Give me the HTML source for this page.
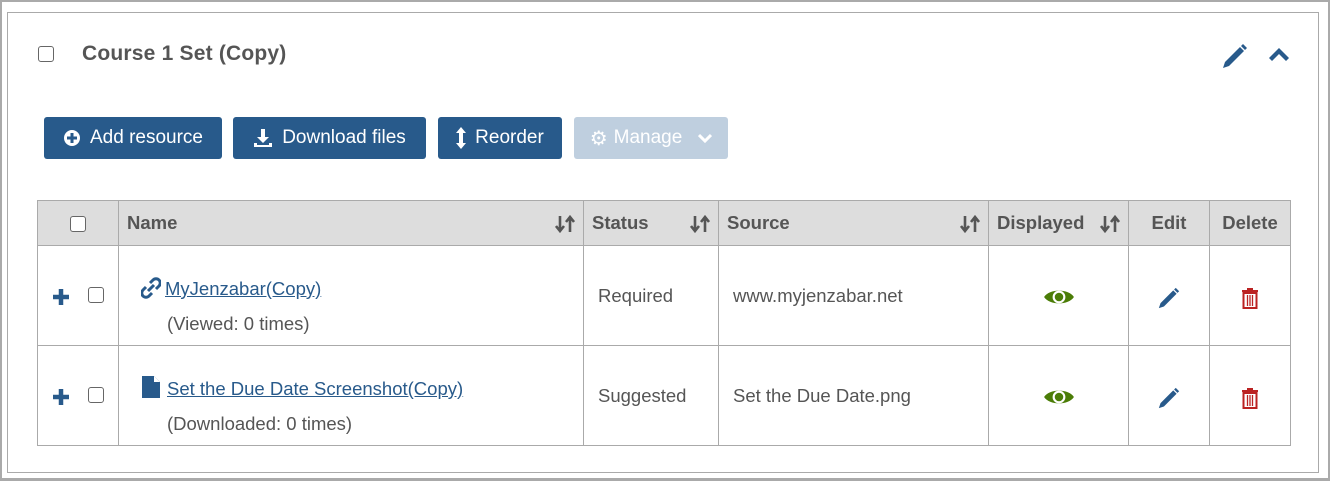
<!DOCTYPE html>
<html><head><meta charset="utf-8"><style>
*{box-sizing:border-box;margin:0;padding:0}
body{width:1330px;height:481px;background:#fff;font-family:"Liberation Sans",sans-serif;color:#555;position:relative;overflow:hidden}
.a{position:absolute}
.outer{left:0;top:0;width:1330px;height:481px;border:2px solid #aaa;border-bottom:none}
.bl{left:0;top:478px;width:1330px;height:3px;background:#aaa}
.panel{left:7px;top:12px;width:1312px;height:461px;border:1px solid #aaa}
.cb{width:16px;height:16px;border:1.5px solid #666;border-radius:3px;background:#fff}
.btn{top:117px;height:42px;background:#285a8b;color:#fff;border-radius:3px;font-size:19px;display:flex;align-items:center;justify-content:center;gap:9px}
table{position:absolute;left:37px;top:200px;border-collapse:collapse;font-size:18.5px}
td,th{border:1px solid #aaa;padding:0 8px;text-align:left}
th{background:#ddd;height:45px;font-weight:bold;color:#555}
td{height:100px;position:relative}
.sort{float:right;margin-top:2px}
a{color:#285a8b}
.c{text-align:center}
.plus{position:absolute;left:14px;top:42px}
.rcb{position:absolute;left:50px;top:41px}
.ic{position:absolute;top:41px;left:50%;transform:translateX(-50%)}
.nm{position:absolute;left:22px;top:25px;line-height:35px;white-space:nowrap}
</style></head><body>
<div class="a outer"></div><div class="a bl"></div>
<div class="a panel"></div>
<div class="a cb" style="left:38px;top:46px"></div>
<div class="a" style="left:82px;top:42px;font-size:21px;font-weight:bold;color:#555;letter-spacing:0.2px">Course 1 Set (Copy)</div>
<svg class="a" style="left:1222px;top:43px" width="26" height="26" viewBox="0 0 26 26"><path d="M1 25l2-6L18 4l4 4L7 23z M19 3l2-2 4 4-2 2z" fill="#285a8b"/></svg>
<svg class="a" style="left:1268px;top:47px" width="22" height="16" viewBox="0 0 22 16"><path d="M1 11l10-10 10 10-3 3-7-7-7 7z" fill="#285a8b"/></svg>
<div class="a btn" style="left:44px;width:178px"><svg width="18" height="18"><circle cx="9" cy="9" r="8" fill="#fff"/><path d="M9 4v10M4 9h10" stroke="#285a8b" stroke-width="3"/></svg>Add resource</div>
<div class="a btn" style="left:233px;width:193px"><svg width="20" height="20"><path d="M8 1h4v8h4l-6 6-6-6h4z M1 15h3v2h12v-2h3v4H1z" fill="#fff"/></svg>Download files</div>
<div class="a btn" style="left:438px;width:124px"><svg width="10" height="22"><path d="M5 0l5 6H7v10h3l-5 6-5-6h3V6H0z" fill="#fff"/></svg>Reorder</div>
<div class="a btn" style="left:574px;width:154px;background:#bfcfdf;gap:6px"><span style="font-size:20px">⚙</span>Manage <svg width="14" height="10" style="margin-left:10px"><path d="M1 2l6 6 6-6" stroke="#fff" stroke-width="3" fill="none"/></svg></div>
<table>
<tr><th style="width:81px;text-align:center"><span class="cb" style="display:inline-block;vertical-align:middle"></span></th>
<th style="width:465px">Name<svg class="sort" width="20" height="20" viewBox="0 0 20 20"><path d="M5 2v14M1 12l4 5 4-5M15 18V4M11 8l4-5 4 5" stroke="#555" stroke-width="2.6" fill="none"/></svg></th>
<th style="width:135px">Status<svg class="sort" width="20" height="20" viewBox="0 0 20 20"><path d="M5 2v14M1 12l4 5 4-5M15 18V4M11 8l4-5 4 5" stroke="#555" stroke-width="2.6" fill="none"/></svg></th>
<th style="width:270px">Source<svg class="sort" width="20" height="20" viewBox="0 0 20 20"><path d="M5 2v14M1 12l4 5 4-5M15 18V4M11 8l4-5 4 5" stroke="#555" stroke-width="2.6" fill="none"/></svg></th>
<th style="width:140px">Displayed<svg class="sort" width="20" height="20" viewBox="0 0 20 20"><path d="M5 2v14M1 12l4 5 4-5M15 18V4M11 8l4-5 4 5" stroke="#555" stroke-width="2.6" fill="none"/></svg></th>
<th style="width:81px" class="c">Edit</th>
<th style="width:81px" class="c">Delete</th></tr>
<tr><td><svg class="plus" width="18" height="18"><path d="M9 1v16M1 9h16" stroke="#285a8b" stroke-width="4.5"/></svg><span class="cb rcb"></span></td>
<td><div class="nm"><svg width="20" height="22" viewBox="0 0 20 22" style="vertical-align:-4px"><path d="M9 6l3-3a4 4 0 016 6l-3 3M11 16l-3 3a4 4 0 01-6-6l3-3M7 14l6-6" stroke="#285a8b" stroke-width="3" fill="none"/></svg><a href="#" style="margin-left:4px">MyJenzabar(Copy)</a><br><span style="margin-left:26px">(Viewed: 0 times)</span></div></td>
<td style="padding-left:14px">Required</td><td style="padding-left:14px">www.myjenzabar.net</td>
<td class="c"><svg class="ic" width="32" height="20" viewBox="0 0 30 18"><path d="M1 9C6 1 24 1 29 9 24 17 6 17 1 9z" fill="#4b7d07"/><circle cx="15" cy="9" r="6" fill="#fff"/><circle cx="15" cy="9" r="4" fill="#4b7d07"/></svg></td>
<td class="c"><svg class="ic" width="22" height="22" viewBox="0 0 26 26"><path d="M1 25l2-6L18 4l4 4L7 23z M19 3l2-2 4 4-2 2z" fill="#285a8b"/></svg></td>
<td class="c"><svg class="ic" width="18" height="22" viewBox="0 0 18 22"><path d="M6 1h6v2h5v2H1V3h5z" fill="#b22"/><rect x="2.5" y="6" width="13" height="15" fill="none" stroke="#b22" stroke-width="2"/><path d="M6.5 8v11M9 8v11M11.5 8v11" stroke="#b22" stroke-width="1.3"/></svg></td></tr>
<tr><td><svg class="plus" width="18" height="18"><path d="M9 1v16M1 9h16" stroke="#285a8b" stroke-width="4.5"/></svg><span class="cb rcb"></span></td>
<td><div class="nm"><svg width="20" height="24" viewBox="0 0 20 24" style="vertical-align:-4px"><path d="M1 1h12l6 6v16H1z" fill="#285a8b"/><path d="M13 1v6h6" fill="#fff"/></svg><a href="#" style="margin-left:6px">Set the Due Date Screenshot(Copy)</a><br><span style="margin-left:26px">(Downloaded: 0 times)</span></div></td>
<td style="padding-left:14px">Suggested</td><td style="padding-left:14px">Set the Due Date.png</td>
<td class="c"><svg class="ic" width="32" height="20" viewBox="0 0 30 18"><path d="M1 9C6 1 24 1 29 9 24 17 6 17 1 9z" fill="#4b7d07"/><circle cx="15" cy="9" r="6" fill="#fff"/><circle cx="15" cy="9" r="4" fill="#4b7d07"/></svg></td>
<td class="c"><svg class="ic" width="22" height="22" viewBox="0 0 26 26"><path d="M1 25l2-6L18 4l4 4L7 23z M19 3l2-2 4 4-2 2z" fill="#285a8b"/></svg></td>
<td class="c"><svg class="ic" width="18" height="22" viewBox="0 0 18 22"><path d="M6 1h6v2h5v2H1V3h5z" fill="#b22"/><rect x="2.5" y="6" width="13" height="15" fill="none" stroke="#b22" stroke-width="2"/><path d="M6.5 8v11M9 8v11M11.5 8v11" stroke="#b22" stroke-width="1.3"/></svg></td></tr>
</table>
</body></html>
